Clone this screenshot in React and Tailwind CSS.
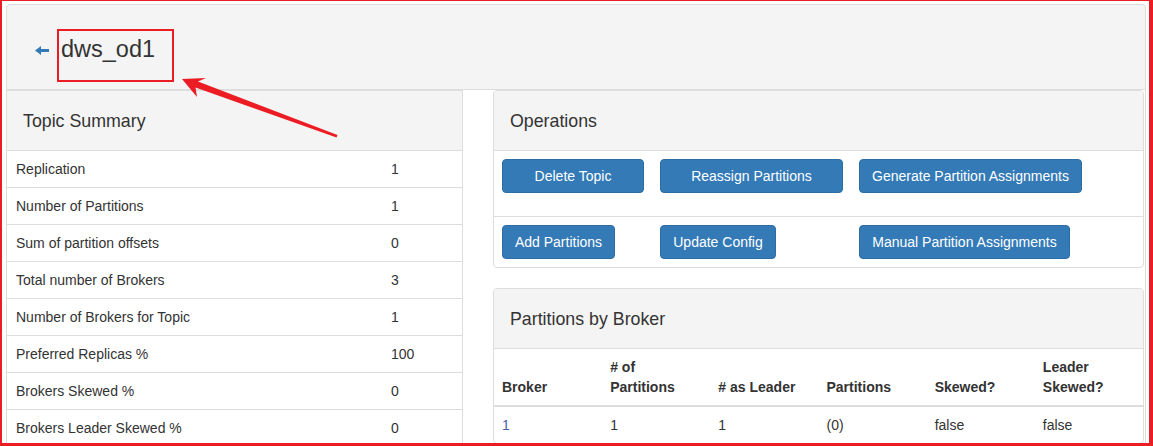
import React from 'react';

const summary = [
    ['Replication', '1'],
    ['Number of Partitions', '1'],
    ['Sum of partition offsets', '0'],
    ['Total number of Brokers', '3'],
    ['Number of Brokers for Topic', '1'],
    ['Preferred Replicas %', '100'],
    ['Brokers Skewed %', '0'],
    ['Brokers Leader Skewed %', '0'],
];

// Blue primary button, bootstrap-ish
function Btn({ children, w }) {
    return (
        <button className={`h-[34px] ${w} rounded-[4px] border border-[#2e6da4] bg-[#337ab7] text-white text-[14px] leading-5 text-center`}>
            {children}
        </button>
    );
}

function PanelHeading({ children }) {
    return (
        <div className="h-[60px] flex items-center pl-[16px] bg-[#f4f4f4] border-b border-[#ddd] text-[17.8px] text-[#333]">
            {children}
        </div>
    );
}

export default function App() {
    return (
        <div
            className="relative w-[1153px] h-[446px] overflow-hidden bg-white border-[#ec1c24] border-l-2 border-t border-r-4 border-b-[3px] pt-[3px] pl-[4px] text-[14px] leading-5 text-[#333]"
            style={{ fontFamily: '"Liberation Sans", Arial, sans-serif' }}
        >
            <div className="w-[1140px]">
                {/* PAGE HEADER */}
                <div className="h-[86px] bg-[#f4f4f4] border border-[#ddd] rounded-t-[4px] flex items-center pl-[28px] pt-[4px]">
                    <svg width="14" height="9" viewBox="0 0 14 9" className="mt-[3px]">
                        <path d="M0 4.5 L6 0 L6 3 L14 3 L14 6 L6 6 L6 9 Z" fill="#337ab7" />
                    </svg>
                    <h3 className="ml-[12px] text-[23.5px] leading-[26px]">dws_od1</h3>
                </div>

                <div className="flex border-x border-[#ddd] h-[360px]">
                    {/* TOPIC SUMMARY */}
                    <div className="w-[456px] border-r border-t border-[#ddd]">
                        <PanelHeading>Topic Summary</PanelHeading>
                        {summary.map(([label, value]) => (
                            <div key={label} className="h-[37px] grid grid-cols-[384px_1fr] items-center border-b border-[#ddd]">
                                <span className="pl-[9px]">{label}</span>
                                <span>{value}</span>
                            </div>
                        ))}
                    </div>

                    <div className="ml-[30px] w-[651px]">
                        {/* OPERATIONS */}
                        <div className="border border-[#ddd] rounded-[4px] overflow-hidden">
                            <PanelHeading>Operations</PanelHeading>
                            <div className="h-[66px] grid grid-cols-[158px_199px_1fr] items-start pt-[8px] border-b border-[#ddd]">
                                <div className="px-2"><Btn w="w-[142px]">Delete Topic</Btn></div>
                                <div className="px-2"><Btn w="w-[183px]">Reassign Partitions</Btn></div>
                                <div className="px-2"><Btn w="w-[223px]">Generate Partition Assignments</Btn></div>
                            </div>
                            <div className="h-[50px] grid grid-cols-[158px_199px_1fr] items-start pt-[8px]">
                                <div className="px-2"><Btn w="w-[113px]">Add Partitions</Btn></div>
                                <div className="px-2"><Btn w="w-[116px]">Update Config</Btn></div>
                                <div className="px-2"><Btn w="w-[211px]">Manual Partition Assignments</Btn></div>
                            </div>
                        </div>

                        {/* PARTITIONS BY BROKER */}
                        <div className="mt-[20px] border border-[#ddd] rounded-[4px] overflow-hidden">
                            <PanelHeading>Partitions by Broker</PanelHeading>
                            <div className="grid grid-cols-6 items-end font-bold border-b-2 border-[#ddd]">
                                <div className="p-2">Broker</div>
                                <div className="p-2"># of<br />Partitions</div>
                                <div className="p-2"># as Leader</div>
                                <div className="p-2">Partitions</div>
                                <div className="p-2">Skewed?</div>
                                <div className="p-2">Leader<br />Skewed?</div>
                            </div>
                            <div className="grid grid-cols-6">
                                <div className="p-2 text-[#4a62a8]">1</div>
                                <div className="p-2">1</div>
                                <div className="p-2">1</div>
                                <div className="p-2">(0)</div>
                                <div className="p-2">false</div>
                                <div className="p-2">false</div>
                            </div>
                        </div>
                    </div>
                </div>
            </div>

            {/* ANNOTATION: red box + arrow */}
            <div className="absolute left-[55px] top-[28px] w-[117px] h-[53px] border-2 border-[#ec1c24]" />
            <svg className="absolute left-0 top-0 pointer-events-none" width="1153" height="446">
                <polygon
                    points="180,78 204,77 196,80.5 335.5,134 334.5,136.5 193.5,86.5 195,96"
                    fill="#ec1c24"
                />
            </svg>
        </div>
    );
}
